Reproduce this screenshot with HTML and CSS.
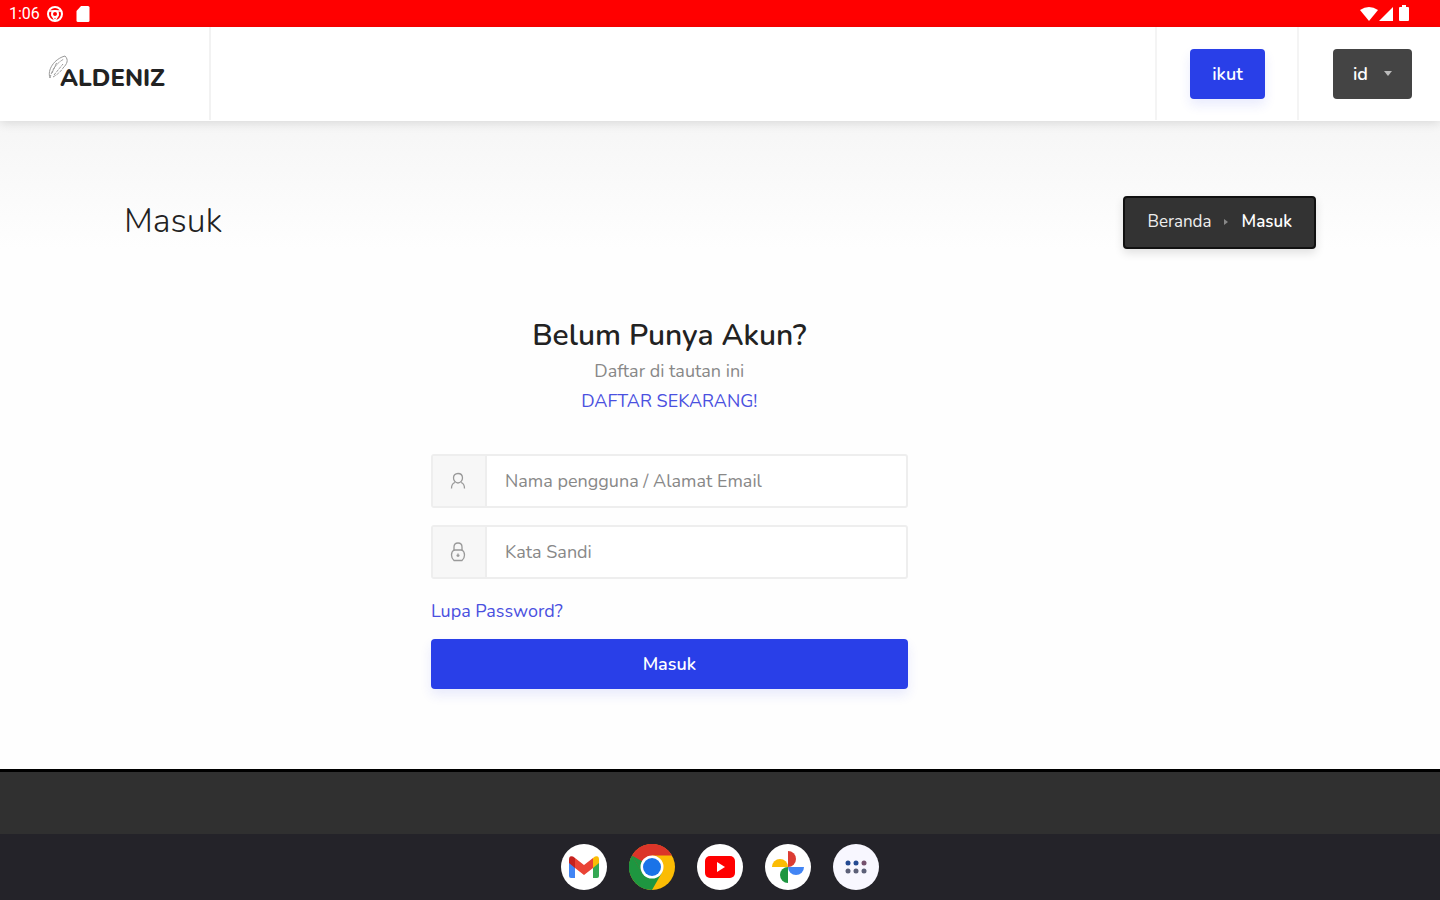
FILE: index.html
```html
<!DOCTYPE html>
<html lang="id">
  <head>
    <meta charset="UTF-8" />
    <meta name="viewport" content="width=device-width, initial-scale=1.0" />
    <title>Masuk - Aldeniz</title>
    <link rel="stylesheet" href="styles.css">
  </head>
  <body>
    <div class="status-bar">
      <span class="time">1:06</span>
      <svg width="18" height="18" viewBox="0 0 18 18">
        <circle cx="9" cy="9" r="7" fill="none" stroke="#fff" stroke-width="2" />
        <circle cx="9" cy="9" r="3" fill="none" stroke="#fff" stroke-width="2" />
        <path d="M3 6h12M6 10l3 6M12 10l-3 6" stroke="#fff" stroke-width="1.5" />
      </svg>
      <svg class="sd-card" width="14" height="18" viewBox="0 0 14 18">
        <path d="M5 1h7q1.500 0 1.500 1.500v13q0 1.500-1.500 1.500H2q-1.500 0-1.500-1.500V6z" fill="#fff" />
      </svg>
      <svg class="signals" width="52" height="18" viewBox="0 0 52 18">
        <path d="M0 5Q9 -1 18 5L9 16z" fill="#fff" />
        <path d="M33 2v14H19z" fill="#fff" />
        <path d="M42 0h4v2h2q1 0 1 1v12q0 1-1 1h-8q-1 0-1-1V3q0-1 1-1h2z" fill="#fff" />
      </svg>
    </div>

    <header class="header">
      <a class="logo" href="#">
        <svg width="24" height="32" viewBox="0 0 24 32" fill="none" stroke="#999" stroke-width="1">
          <path d="M2 23C-1 15 6 4 17 1C21 5 19 9 15 13" />
          <path d="M2 23Q5 10 16 4M4 18L9 7M6 20L15 9M5 22Q12 18 15 13" stroke-dasharray="3 1" />
        </svg>
        <span>ALDENIZ</span>
      </a>
      <div class="header-cell join">
        <a class="btn btn-primary" href="#">ikut</a>
      </div>
      <div class="header-cell">
        <button class="btn btn-lang" type="button">id <span class="caret"></span></button>
      </div>
    </header>

    <main>
      <section class="page-title">
        <div class="container title-row">
          <h1>Masuk</h1>
          <nav class="breadcrumb">
            <a href="#">Beranda</a>
            <span class="arrow"></span>
            <span>Masuk</span>
          </nav>
        </div>
      </section>

      <section class="container">
        <form class="login">
          <div class="intro">
            <h2>Belum Punya Akun?</h2>
            <p>Daftar di tautan ini</p>
            <a href="#">DAFTAR SEKARANG!</a>
          </div>

          <div class="field">
            <label for="username" aria-label="Nama pengguna">
              <svg width="16" height="18" viewBox="0 0 16 18" fill="none" stroke="#999" stroke-width="1.300">
                <path d="M8 1.500c3 0 4.500 2 4.500 4.500S10.500 11 8 11S3.500 8.500 3.500 6S5 1.500 8 1.500z" />
                <path d="M5 10.500Q1.500 11.500 1.500 16.500M11 10.500Q14.500 11.500 14.500 16.500" />
              </svg>
            </label>
            <input id="username" type="text" placeholder="Nama pengguna / Alamat Email" />
          </div>

          <div class="field">
            <label for="password" aria-label="Kata Sandi">
              <svg width="16" height="20" viewBox="0 0 16 20" fill="none" stroke="#999" stroke-width="1.300">
                <path d="M4 9V5q0-4 4-4t4 4v4" />
                <path d="M4 8h8q2.500 1.500 2.500 5T12 18.500H4Q1.500 16.500 1.500 13T4 8z" />
                <path d="M8 11.500v3.500M6.500 13.500h3" />
              </svg>
            </label>
            <input id="password" type="password" placeholder="Kata Sandi" />
          </div>

          <a class="forgot" href="#">Lupa Password?</a>
          <button class="btn btn-primary btn-block" type="submit">Masuk</button>
        </form>
      </section>
    </main>

    <footer class="footer"></footer>

    <nav class="dock">
      <a href="#" aria-label="Gmail">
        <svg viewBox="0 0 46 46">
          <circle cx="23" cy="23" r="23" fill="#fff" />
          <path d="M8 15v17q0 2 2 2h4V20z" fill="#4285f4" />
          <path d="M38 15v17q0 2-2 2h-4V20z" fill="#34a853" />
          <path d="M32 14l2-1.500q4-1.500 4 3V19l-6 5z" fill="#fbbc04" />
          <path d="M14 14l-2-1.500q-4-1.500-4 3V19l6 5z" fill="#c5221f" />
          <path d="M14 14l9 7l9-7v10l-9 7l-9-7z" fill="#ea4335" />
        </svg>
      </a>
      <a href="#" aria-label="Chrome">
        <svg viewBox="0 0 46 46">
          <circle cx="23" cy="23" r="23" fill="#fbbc04" />
          <path d="M23 23L3 11.500A23 23 0 0 0 23 46L33 28.500z" fill="#1e9640" />
          <path d="M23 23L3 11.500A23 23 0 0 1 43 11.500H23z" fill="#dc3529" />
          <path d="M3 11.500L13 28.500L23 23V11.500z" fill="#dc3529" />
          <path d="M3 11.500L13 29L23 34V23z" fill="#1e9640" />
          <circle cx="23" cy="23" r="11.500" fill="#fff" />
          <circle cx="23" cy="23" r="9" fill="#1a73e8" />
        </svg>
      </a>
      <a href="#" aria-label="YouTube">
        <svg viewBox="0 0 46 46">
          <circle cx="23" cy="23" r="23" fill="#fff" />
          <rect x="8" y="12" width="30" height="22" rx="5" fill="#f00" />
          <path d="M20 18l8 5l-8 5z" fill="#fff" />
        </svg>
      </a>
      <a href="#" aria-label="Foto">
        <svg viewBox="0 0 46 46">
          <circle cx="23" cy="23" r="23" fill="#fff" />
          <path d="M23 23V7a8 8 0 0 1 0 16z" fill="#dc3c32" />
          <path d="M23 23h16a8 8 0 0 1-16 0z" fill="#4285f4" />
          <path d="M23 23v16a8 8 0 0 1 0-16z" fill="#1e9640" />
          <path d="M23 23H7a8 8 0 0 1 16 0z" fill="#fbbc04" />
        </svg>
      </a>
      <a href="#" aria-label="Semua aplikasi">
        <svg viewBox="0 0 46 46">
          <circle cx="23" cy="23" r="23" fill="#f8f7ff" />
          <g fill="#244a92">
            <circle cx="15" cy="19" r="2.500" />
            <circle cx="23" cy="19" r="2.500" />
            <circle cx="31" cy="19" r="2.500" fill="#75516d" />
          </g>
          <g fill="#5c6078">
            <circle cx="15" cy="27" r="2.500" />
            <circle cx="23" cy="27" r="2.500" />
            <circle cx="31" cy="27" r="2.500" />
          </g>
        </svg>
      </a>
    </nav>
  </body>
</html>
```
FILE: styles.css
```css
* {
  box-sizing: border-box;
}

body {
  margin: 0;
  min-height: 100vh;
  display: flex;
  flex-direction: column;
  font-family: Nunito, Lato, sans-serif;
  font-size: 18px;
  line-height: 30px;
  color: #222;
  background: #fefefe;
}

a {
  color: #4a50e0;
  text-decoration: none;
}

svg {
  display: block;
}

h1,
h2,
p {
  margin: 0;
}

.status-bar {
  display: flex;
  align-items: center;
  height: 27px;
  padding: 0 28px 0 9px;
  background: #ff0000;
  color: #fff;
  font-family: Roboto, sans-serif;
  font-size: 16px;
}

.time {
  margin-right: 6px;
}

.sd-card {
  margin-left: 12px;
}

.signals {
  margin-left: auto;
}

.header {
  position: relative;
  display: flex;
  height: 94px;
  padding-bottom: 1px;
  background: #fff;
  box-shadow: 0 2px 10px rgba(0, 0, 0, 0.12);
}

.logo {
  display: flex;
  width: 211px;
  padding: 28px 0 0 48px;
  border-right: 2px solid #f2f2f2;
  color: #222;
  font-size: 24px;
  font-weight: 800;
}

.logo span {
  margin: 8px 0 0 -12px;
}

.header-cell {
  display: flex;
  align-items: center;
  justify-content: flex-end;
  width: 141px;
  padding-right: 28px;
}

.join {
  width: 144px;
  margin-left: auto;
  padding-right: 32px;
  border-left: 2px solid #f4f4f4;
  border-right: 2px solid #f4f4f4;
}

.btn {
  height: 50px;
  padding: 0 20px;
  border: 0;
  border-radius: 4px;
  color: #fff;
  font-family: inherit;
  font-size: 18px;
  font-weight: 600;
  line-height: 50px;
  text-align: center;
}

.btn-primary {
  background: #293fe8;
  box-shadow: 0 6px 12px rgba(41, 63, 232, 0.1);
}

.join .btn {
  width: 75px;
}

.btn-lang {
  display: flex;
  align-items: center;
  justify-content: space-between;
  width: 79px;
  background: #444;
}

.caret {
  border: 4px solid transparent;
  border-top: 5px solid #bbb;
  border-bottom: 0;
}

main {
  flex: 1;
}

.container {
  max-width: 1216px;
  margin: 0 auto;
}

.page-title {
  padding: 75px 0 0;
  background: linear-gradient(#f6f6f6, #fefefe);
}

.title-row {
  display: flex;
  align-items: center;
  justify-content: space-between;
  padding: 0 12px;
}

h1 {
  padding-bottom: 4px;
  font-size: 34px;
  font-weight: 300;
  line-height: 40px;
}

.breadcrumb {
  display: flex;
  align-items: center;
  height: 53px;
  padding: 0 22px 2px;
  border: 2px solid #111;
  border-radius: 4px;
  background: #333;
  color: #fff;
  font-size: 17px;
  font-weight: 600;
  box-shadow: 0 4px 10px rgba(0, 0, 0, 0.12);
}

.breadcrumb a {
  color: #eee;
  font-weight: 400;
}

.arrow {
  margin: 0 14px 0 12px;
  border: 3px solid transparent;
  border-left: 4px solid #888;
  border-right: 0;
}

.login {
  width: calc(100% * 5 / 12);
  margin-left: 25%;
  padding: 67px 15px 80px;
}

.intro {
  margin-bottom: 38px;
  text-align: center;
}

.intro p {
  color: #888;
}

h2 {
  font-size: 30px;
  font-weight: 600;
  line-height: 40px;
}

.field {
  display: flex;
  height: 54px;
  margin-bottom: 17px;
  border: 2px solid #eee;
  border-radius: 3px;
  background: #fff;
}

.field label {
  display: flex;
  align-items: center;
  justify-content: center;
  width: 54px;
  padding-right: 2px;
  border-right: 2px solid #eee;
  background: #f7f7f7;
}

.field input {
  flex: 1;
  min-width: 0;
  padding: 0 18px;
  border: 0;
  background: none;
  font-family: inherit;
  font-size: 18px;
}

.field input::placeholder {
  color: #888;
}

.forgot {
  display: block;
  margin-bottom: 13px;
}

.btn-block {
  display: block;
  width: 100%;
}

.footer {
  height: 65px;
  border-top: 3px solid #000;
  background: #303030;
}

.dock {
  display: flex;
  align-items: center;
  justify-content: center;
  gap: 22px;
  height: 67px;
  padding-bottom: 2px;
  background: #242329;
}

.dock svg {
  width: 46px;
  height: 46px;
}
```
